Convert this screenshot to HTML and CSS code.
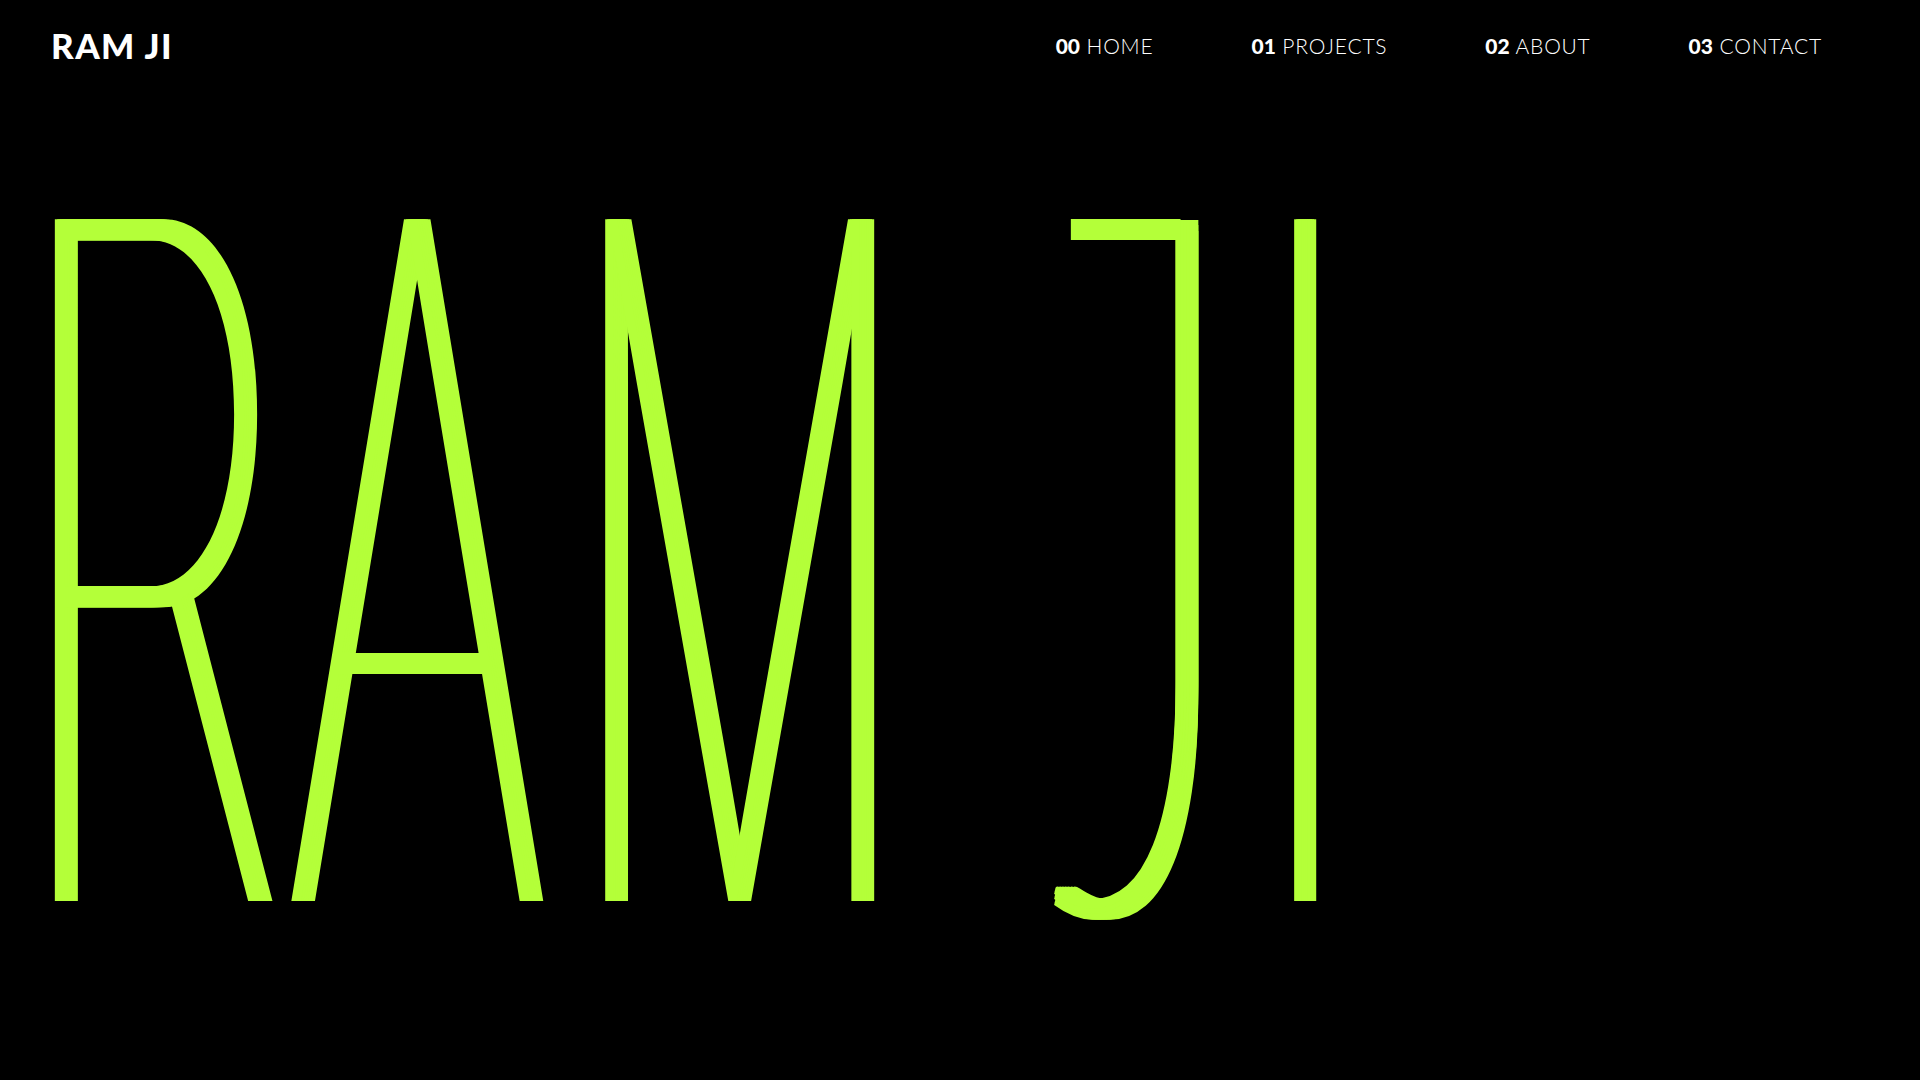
FILE: index.html
```html
<!DOCTYPE html>
<html lang="en">
<head>
<meta charset="utf-8">
<title>Ram Ji</title>
<link rel="stylesheet" href="styles.css">
</head>
<body>
<header class="header">
  <div class="logo">RAM JI</div>
  <nav class="nav">
    <a class="nav-item" href="#"><span class="num">00</span> HOME</a>
    <a class="nav-item" href="#"><span class="num">01</span> PROJECTS</a>
    <a class="nav-item" href="#"><span class="num">02</span> ABOUT</a>
    <a class="nav-item" href="#"><span class="num">03</span> CONTACT</a>
  </nav>
</header>
<main class="hero">
  <h1 class="hero-title" aria-label="RAM JI"><span class="ch ch-r">R</span><span class="ch ch-a">A</span><span class="ch ch-m">M</span><span class="ch ch-j">J</span><span class="ch ch-i">I</span></h1>
</main>
</body>
</html>
```

FILE: styles.css
```css
* { box-sizing: border-box; }
html, body {
  margin: 0;
  padding: 0;
  background: #000;
  width: 1920px;
  height: 1080px;
  overflow: hidden;
}
body {
  font-family: "Lato", "Liberation Sans", sans-serif;
  color: #fff;
}
.header {
  display: flex;
  align-items: center;
  justify-content: space-between;
  height: 90px;
  padding: 0 98px 0 51px;
}
.logo {
  font-family: "Lato", sans-serif;
  font-weight: 900;
  font-size: 35px;
  letter-spacing: 1.4px;
}
.nav {
  display: flex;
  gap: 98px;
}
.nav-item {
  color: #fff;
  text-decoration: none;
  font-size: 21px;
  font-weight: 300;
  letter-spacing: 0.8px;
}
.num {
  font-weight: 900;
  letter-spacing: 0;
}
.hero {
  height: 990px;
  padding-top: 2px;
  overflow: hidden;
}
.hero-title {
  margin: 0;
  padding-left: 4px;
  display: flex;
  align-items: flex-start;
  font-family: "Inter", sans-serif;
  font-weight: 100;
  font-size: 937px;
  line-height: 1;
  color: #b4ff39;
  white-space: nowrap;
}
.ch {
  display: block;
  flex: none;
  transform-origin: left top;
}
.ch-r {
  width: 274px;
  transform: scaleX(0.479);
  text-shadow: 5px 0 #b4ff39, 10px 0 #b4ff39, 15px 0 #b4ff39, 20px 0 #b4ff39, 27px 0 #b4ff39;
}
.ch-a {
  width: 284px;
  transform: scaleX(0.442);
  text-shadow: 5px 0 #b4ff39, 10px 0 #b4ff39, 15px 0 #b4ff39, 20px 0 #b4ff39, 25px 0 #b4ff39, 31px 0 #b4ff39;
}
.ch-m {
  width: 486px;
  transform: scaleX(0.407);
  text-shadow: 5px 0 #b4ff39, 10px 0 #b4ff39, 15px 0 #b4ff39, 20px 0 #b4ff39, 25px 0 #b4ff39, 30px 0 #b4ff39, 35px 0 #b4ff39;
}
.ch-j {
  position: relative;
  width: 209px;
  margin-top: -54px;
  font-family: "Lato", sans-serif;
  font-weight: 200;
  font-size: 973px;
  transform: scaleX(0.457);
  text-shadow:
    0 5px #b4ff39, 0 11px #b4ff39,
    6px 0 #b4ff39, 6px 5px #b4ff39, 6px 11px #b4ff39,
    12px 0 #b4ff39, 12px 5px #b4ff39, 12px 11px #b4ff39,
    18px 0 #b4ff39, 18px 5px #b4ff39, 18px 11px #b4ff39,
    24px 0 #b4ff39, 24px 5px #b4ff39, 24px 11px #b4ff39,
    31px 0 #b4ff39, 31px 5px #b4ff39, 31px 11px #b4ff39,
    38px 0 #b4ff39, 38px 5px #b4ff39, 38px 11px #b4ff39;
}
.ch-j::before {
  content: "";
  position: absolute;
  left: 50px;
  top: 181px;
  width: 240px;
  height: 21px;
  background: #b4ff39;
}
.ch-i {
  width: 60px;
  transform: scaleX(0.35);
  text-shadow: 6px 0 #b4ff39, 12px 0 #b4ff39, 18px 0 #b4ff39, 24px 0 #b4ff39, 30px 0 #b4ff39, 36px 0 #b4ff39, 42px 0 #b4ff39;
}
```
